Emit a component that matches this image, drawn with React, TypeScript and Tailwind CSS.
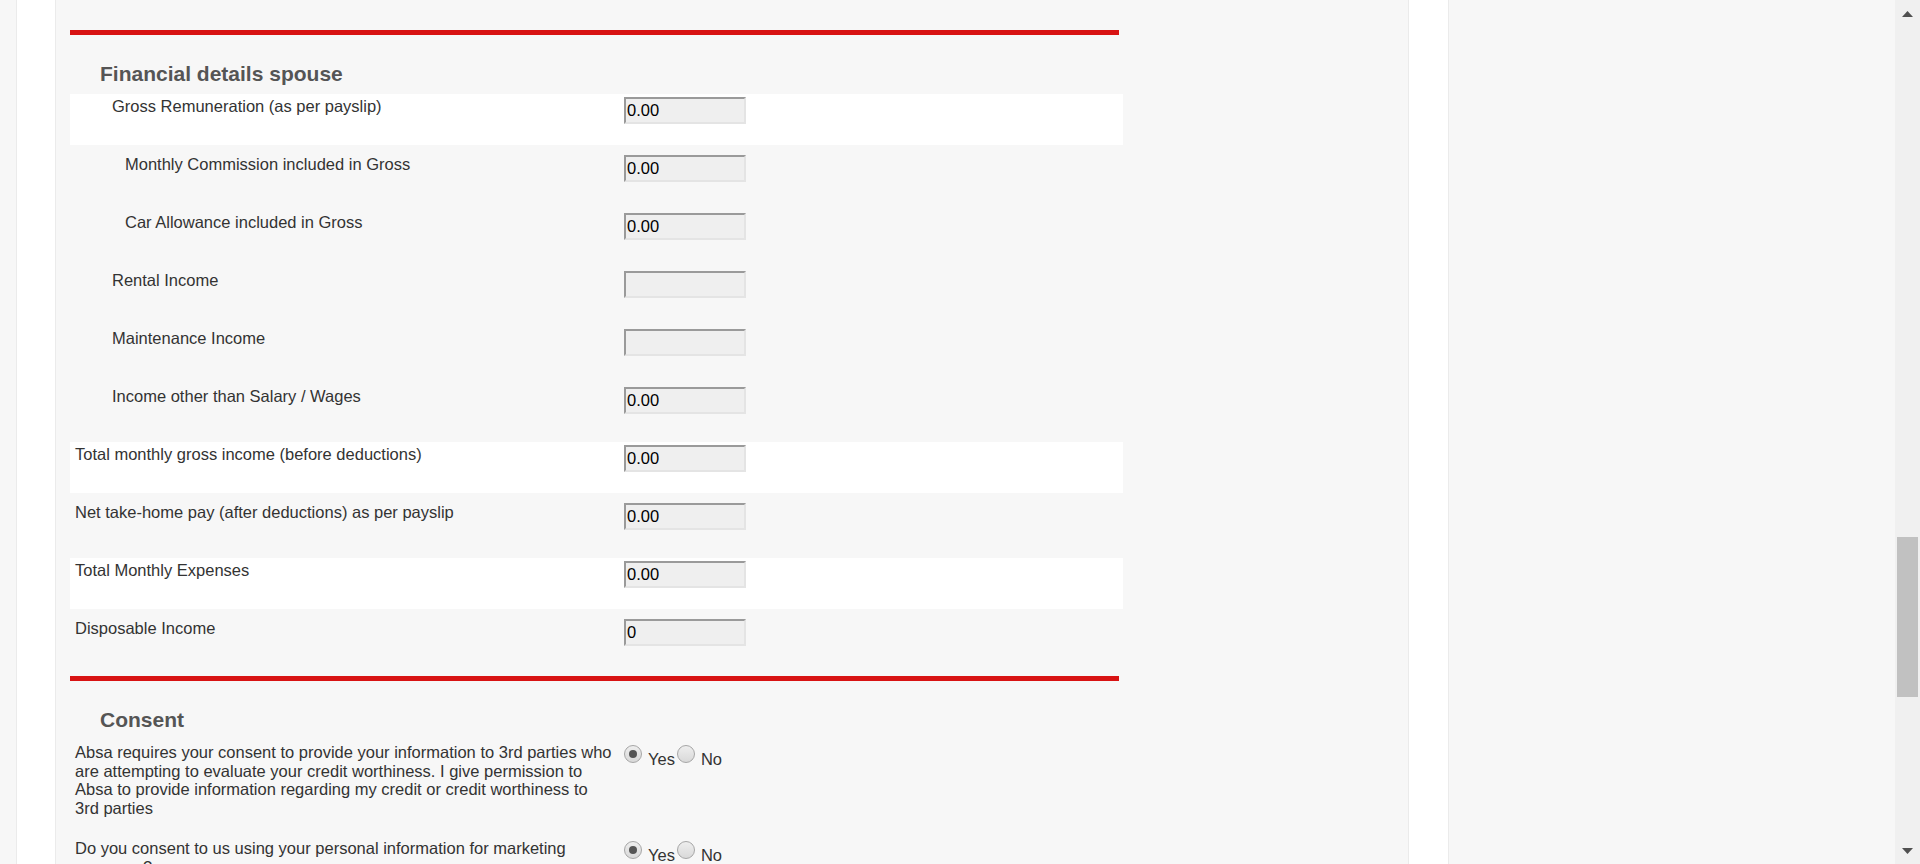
import React from 'react';

type Row = { label: string; value: string; indent: number; white?: boolean };

const rows: Row[] = [
  { label: 'Gross Remuneration (as per payslip)', value: '0.00', indent: 1, white: true },
  { label: 'Monthly Commission included in Gross', value: '0.00', indent: 2 },
  { label: 'Car Allowance included in Gross', value: '0.00', indent: 2 },
  { label: 'Rental Income', value: '', indent: 1 },
  { label: 'Maintenance Income', value: '', indent: 1 },
  { label: 'Income other than Salary / Wages', value: '0.00', indent: 1 },
  { label: 'Total monthly gross income (before deductions)', value: '0.00', indent: 0, white: true },
  { label: 'Net take-home pay (after deductions) as per payslip', value: '0.00', indent: 0 },
  { label: 'Total Monthly Expenses', value: '0.00', indent: 0, white: true },
  { label: 'Disposable Income', value: '0', indent: 0 },
];

const indentClass = ['pl-[5px]', 'pl-[42px]', 'pl-[55px]'];

function Radio({ checked }: { checked?: boolean }) {
  return (
    <span className="mt-[2px] flex h-[18px] w-[18px] shrink-0 items-center justify-center rounded-full border border-[#a6a6a6] bg-gradient-to-b from-[#eeeeee] to-[#d9d9d9]">
      {checked && <span className="h-[8px] w-[8px] rounded-full bg-[#555]" />}
    </span>
  );
}

function YesNo() {
  return (
    <div className="flex items-start text-[#333]">
      <Radio checked />
      <span className="ml-[6px] mt-[7px]">Yes</span>
      <span className="ml-[2px]">
        <Radio />
      </span>
      <span className="ml-[6px] mt-[7px]">No</span>
    </div>
  );
}

function RedRule() {
  return <div className="h-[5px] w-[1049px] bg-[#d81313]" />;
}

function Heading({ children }: { children: React.ReactNode }) {
  return (
    <h2 className="mt-[27px] h-[23px] pl-[30px] text-[21px] font-bold leading-[23px] text-[#555]">
      {children}
    </h2>
  );
}

export default function App() {
  return (
    <div className="flex h-[864px] w-full overflow-hidden bg-[#f7f7f7] font-['Liberation_Sans',Arial,sans-serif] text-[16.5px] leading-[18.6px] text-[#333]">
      <div className="ml-[16px] w-[40px] shrink-0 border-x border-[#ebebeb] bg-white" />

      <main className="w-[1352px] shrink-0 pl-[14px] pt-[30px]">
        <RedRule />
        <Heading>Financial details spouse</Heading>

        <div className="mt-[9px] flex w-[1053px] flex-col gap-[7px]">
          {rows.map((r) => (
            <div
              key={r.label}
              className={`flex h-[51px] items-start pt-[3px] ${r.white ? 'bg-white' : ''}`}
            >
              <div className={`w-[554px] shrink-0 ${indentClass[r.indent]}`}>{r.label}</div>
              <input
                readOnly
                defaultValue={r.value}
                className="h-[27px] w-[122px] border-2 border-t-[#9a9a9a] border-l-[#9a9a9a] border-r-[#e4e4e4] border-b-[#e4e4e4] bg-[#efefef] px-[1px] text-[16.5px] text-black outline-none"
              />
            </div>
          ))}
        </div>

        <div className="mt-[9px]">
          <RedRule />
        </div>
        <Heading>Consent</Heading>

        <div className="mt-[9px] flex w-[1053px] flex-col gap-[19px]">
          <div className="flex items-start pt-[3px]">
            <p className="w-[554px] shrink-0 pl-[5px] pr-[10px]">
              Absa requires your consent to provide your information to 3rd parties who are attempting to
              evaluate your credit worthiness. I give permission to Absa to provide information regarding my
              credit or credit worthiness to 3rd parties
            </p>
            <YesNo />
          </div>
          <div className="flex items-start pt-[3px]">
            <p className="w-[554px] shrink-0 pl-[5px] pr-[10px]">
              Do you consent to us using your personal information for marketing purposes?
            </p>
            <YesNo />
          </div>
        </div>
      </main>

      <div className="w-[41px] shrink-0 border-x border-[#ebebeb] bg-white" />
      <div className="flex-1" />

      <div className="flex w-[25px] shrink-0 flex-col items-center bg-[#f0f0f0]">
        <svg className="mt-[11px]" width="11" height="6" viewBox="0 0 11 6">
          <polygon points="0,6 5.5,0 11,6" fill="#505050" />
        </svg>
        <div className="mt-[520px] h-[160px] w-[21px] bg-[#c1c1c1]" />
        <svg className="mt-[151px]" width="11" height="6" viewBox="0 0 11 6">
          <polygon points="0,0 11,0 5.5,6" fill="#505050" />
        </svg>
      </div>
    </div>
  );
}
